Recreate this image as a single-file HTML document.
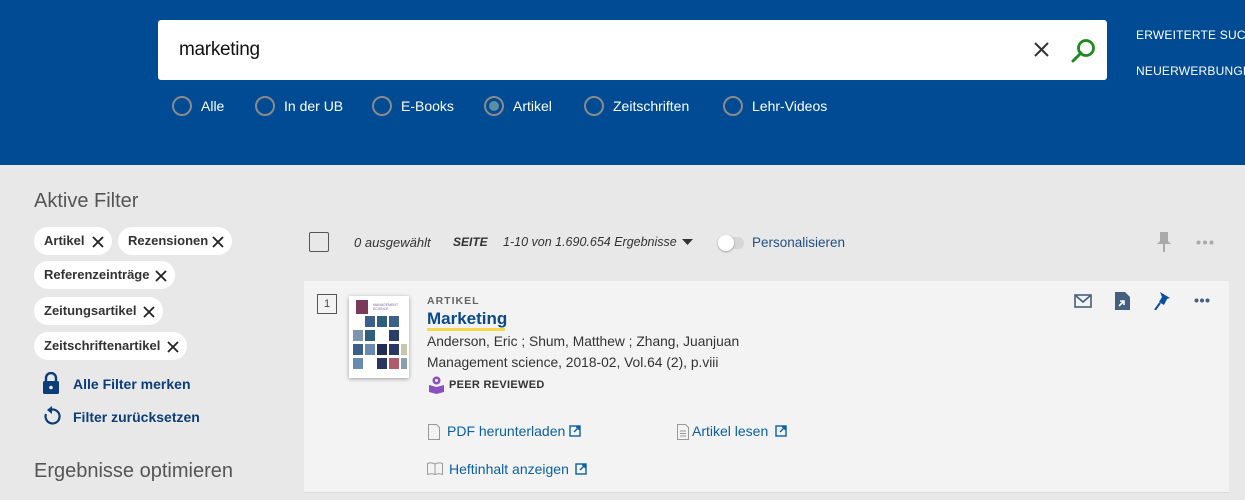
<!DOCTYPE html>
<html><head><meta charset="utf-8">
<style>
*{box-sizing:border-box;margin:0;padding:0}
body{width:1245px;height:500px;overflow:hidden;background:#e8e8e8;font-family:"Liberation Sans",sans-serif;position:relative}
.hdr{position:absolute;left:0;top:0;width:1245px;height:165px;background:#004b93}
.search{position:absolute;left:158px;top:20px;width:949px;height:60px;background:#fff;border-radius:3px}
.search .q{position:absolute;left:21px;top:19px;font-size:19px;color:#111;letter-spacing:-0.3px}
.radios{position:absolute;top:96px;left:172px;color:#fff;font-size:14px}
.r{position:absolute;top:0;white-space:nowrap}
.r i{position:absolute;left:0;top:0;width:20px;height:20px;border:2px solid #8a8a8a;border-radius:50%}
.r span{position:absolute;left:29px;top:2px}
.r i.on::after{content:"";position:absolute;left:3px;top:3px;width:10px;height:10px;border-radius:50%;background:#5b8fa0}
.toplink{position:absolute;left:1136px;color:#fff;font-size:12px;white-space:nowrap;letter-spacing:0.2px}
.ab{position:absolute;left:34px;top:190px;font-size:20px;color:#555;font-weight:300}
.chip{position:absolute;height:28px;background:#fff;border-radius:14px;font-size:13px;font-weight:bold;color:#333;padding:6px 0 0 10px;white-space:nowrap}
.chip svg{position:absolute;right:8px;top:9px}
.lnk{position:absolute;left:73px;font-size:14px;font-weight:bold;color:#0b3d78}
.eo{position:absolute;left:34px;top:460px;font-size:20px;color:#555}
.bar{position:absolute;top:232px;font-size:13px;color:#333;white-space:nowrap}
.card{position:absolute;left:304px;top:281px;width:925px;height:212px;background:#f3f3f3;border-bottom:1px solid #ddd}
.num{position:absolute;left:13px;top:13px;width:20px;height:20px;border:1px solid #555;font-size:11px;color:#444;text-align:center;line-height:18px}
.cover{position:absolute;left:45px;top:15px;width:60px;height:82px;background:#fff;box-shadow:0 1px 4px rgba(0,0,0,.35)}
.cl{position:absolute;font-size:14px;color:#0b5fa5;white-space:nowrap}
</style></head><body>
<div class="hdr">
 <div class="search"><div class="q">marketing</div>
  <svg style="position:absolute;left:875px;top:21px" width="17" height="17" viewBox="0 0 17 17"><path d="M2 2L15 15M15 2L2 15" stroke="#333" stroke-width="2"/></svg>
  <svg style="position:absolute;left:912px;top:17px" width="28" height="28" viewBox="0 0 28 28"><circle cx="16" cy="11" r="7.5" stroke="#1e8a1e" stroke-width="2.8" fill="none"/><path d="M11 16L3 24" stroke="#1e8a1e" stroke-width="3" stroke-linecap="round"/></svg>
 </div>
 <div class="radios">
  <div class="r" style="left:0"><i></i><span>Alle</span></div>
  <div class="r" style="left:83px"><i></i><span>In der UB</span></div>
  <div class="r" style="left:200px"><i></i><span>E-Books</span></div>
  <div class="r" style="left:312px"><i class="on"></i><span>Artikel</span></div>
  <div class="r" style="left:412px"><i></i><span>Zeitschriften</span></div>
  <div class="r" style="left:551px"><i></i><span>Lehr-Videos</span></div>
 </div>
 <div class="toplink" style="top:28px">ERWEITERTE SUCHE</div>
 <div class="toplink" style="top:64px">NEUERWERBUNGEN</div>
</div>

<div class="ab">Aktive Filter</div>
<div class="chip" style="left:34px;top:227px;width:78px">Artikel<svg width="12" height="12"><path d="M1 1L11 11M11 1L1 11" stroke="#222" stroke-width="1.8"/></svg></div>
<div class="chip" style="left:118px;top:227px;width:114px">Rezensionen<svg width="12" height="12"><path d="M1 1L11 11M11 1L1 11" stroke="#222" stroke-width="1.8"/></svg></div>
<div class="chip" style="left:34px;top:261px;width:141px">Referenzeinträge<svg width="12" height="12"><path d="M1 1L11 11M11 1L1 11" stroke="#222" stroke-width="1.8"/></svg></div>
<div class="chip" style="left:34px;top:297px;width:129px">Zeitungsartikel<svg width="12" height="12"><path d="M1 1L11 11M11 1L1 11" stroke="#222" stroke-width="1.8"/></svg></div>
<div class="chip" style="left:34px;top:332px;width:153px">Zeitschriftenartikel<svg width="12" height="12"><path d="M1 1L11 11M11 1L1 11" stroke="#222" stroke-width="1.8"/></svg></div>
<svg style="position:absolute;left:42px;top:372px" width="18" height="22" viewBox="0 0 18 22"><path d="M4 10V6a5 5 0 0110 0v4" stroke="#0b3d78" stroke-width="2.4" fill="none"/><rect x="1" y="9" width="16" height="13" rx="1.5" fill="#0b3d78"/><circle cx="9" cy="15.5" r="1.8" fill="#e8e8e8"/></svg>
<div class="lnk" style="top:376px">Alle Filter merken</div>
<svg style="position:absolute;left:42px;top:405px" width="20" height="22" viewBox="0 0 20 22"><path d="M4 9a7 7 0 106-4.5" stroke="#0b3d78" stroke-width="2.2" fill="none"/><path d="M10 1v8l-5-4z" fill="#0b3d78"/></svg>
<div class="lnk" style="top:409px">Filter zurücksetzen</div>
<div class="eo">Ergebnisse optimieren</div>

<div style="position:absolute;left:309px;top:232px;width:20px;height:20px;border:1.5px solid #555;border-radius:2px"></div>
<div class="bar" style="left:354px;top:235px;font-style:italic">0 ausgewählt</div>
<div class="bar" style="left:453px;top:235px;font-style:italic;font-weight:bold;font-size:12px">SEITE</div>
<div class="bar" style="left:503px;top:235px;font-style:italic;font-size:12.5px">1-10 von 1.690.654 Ergebnisse</div>
<svg style="position:absolute;left:682px;top:239px" width="11" height="6"><path d="M0 0h11L5.5 6z" fill="#333"/></svg>
<div style="position:absolute;left:718px;top:237px;width:26px;height:12px;border-radius:6px;background:#d6d6d6"></div>
<div style="position:absolute;left:718px;top:235px;width:16px;height:16px;border-radius:50%;background:#fff;box-shadow:0 1px 2px rgba(0,0,0,.3)"></div>
<div class="bar" style="left:752px;top:235px;color:#1f4f82;font-size:13.5px">Personalisieren</div>
<svg style="position:absolute;left:1157px;top:231px" width="14" height="21" viewBox="0 0 14 21"><path d="M3 1h8v9l3 3H0l3-3z" fill="#aaa"/><rect x="6" y="13" width="2" height="8" fill="#aaa"/></svg>
<svg style="position:absolute;left:1196px;top:240px" width="18" height="5"><circle cx="2.5" cy="2.5" r="2" fill="#aaa"/><circle cx="9" cy="2.5" r="2" fill="#aaa"/><circle cx="15.5" cy="2.5" r="2" fill="#aaa"/></svg>

<div class="card">
 <div class="num">1</div>
 <div class="cover">
  <svg width="60" height="82" viewBox="0 0 60 82">
   <rect x="7" y="4" width="12" height="14" fill="#7a3a5a"/>
   <text x="24" y="10" font-size="3.5" fill="#7a6a9a" font-family="Liberation Sans">MANAGEMENT</text>
   <text x="24" y="14" font-size="3.5" fill="#7a6a9a" font-family="Liberation Sans">SCIENCE</text>
   <g fill="#3c5f8a">
   <rect x="16" y="20" width="10" height="11"/><rect x="28" y="20" width="10" height="11" fill="#2f5f7a"/><rect x="40" y="20" width="10" height="11"/>
   <rect x="4" y="34" width="10" height="11" fill="#7d95b0"/><rect x="16" y="34" width="10" height="11" fill="#2f5f7a"/><rect x="40" y="34" width="10" height="11" fill="#2a3d6a"/>
   <rect x="4" y="48" width="10" height="11"/><rect x="16" y="48" width="10" height="11" fill="#6a8ab0"/><rect x="28" y="48" width="10" height="11" fill="#222d55"/><rect x="40" y="48" width="10" height="11" fill="#2a3560"/><rect x="52" y="48" width="6" height="11" fill="#c8c8a8"/>
   <rect x="4" y="62" width="10" height="11" fill="#6a8ab0"/><rect x="28" y="62" width="10" height="11" fill="#2a3560"/><rect x="40" y="62" width="10" height="11" fill="#b05a6a"/><rect x="52" y="62" width="6" height="11" fill="#8aa0b0"/>
   </g>
  </svg>
 </div>
 <div class="cl" style="left:123px;top:14px;font-size:10.5px;font-weight:bold;color:#666;letter-spacing:1px">ARTIKEL</div>
 <div class="cl" style="left:123px;top:28px;font-size:17px;font-weight:bold;color:#0b4a8a">Marketing</div>
 <div style="position:absolute;left:123px;top:47px;width:78px;height:3px;background:#f5d94a"></div>
 <div class="cl" style="left:123px;top:53px;color:#333;font-size:13.8px">Anderson, Eric ; Shum, Matthew ; Zhang, Juanjuan</div>
 <div class="cl" style="left:123px;top:74px;color:#333;font-size:13.8px">Management science, 2018-02, Vol.64 (2), p.viii</div>
 <svg style="position:absolute;left:125px;top:95px" width="15" height="18" viewBox="0 0 15 18"><circle cx="7.5" cy="4.5" r="4" fill="#8a4fc0"/><circle cx="7.5" cy="4.5" r="1.5" fill="#fff"/><path d="M0 9l7.5 2 7.5-2v7l-7.5 2-7.5-2z" fill="#8a4fc0"/></svg>
 <div class="cl" style="left:145px;top:98px;font-size:11px;font-weight:bold;color:#333;letter-spacing:0.3px">PEER REVIEWED</div>
 <svg style="position:absolute;left:124px;top:143px" width="12" height="16" viewBox="0 0 12 16"><path d="M.5.5h8l3 3v12H.5z" fill="none" stroke="#999"/></svg>
 <div class="cl" style="left:143px;top:142px">PDF herunterladen</div>
 <svg style="position:absolute;left:265px;top:144px" width="12" height="12"><rect x="1" y="1" width="10" height="10" fill="none" stroke="#0b5fa5" stroke-width="1.4"/><path d="M5 7l5-5M7 2h3v3" stroke="#0b5fa5" stroke-width="1.4" fill="none"/></svg>
 <svg style="position:absolute;left:373px;top:143px" width="12" height="16" viewBox="0 0 12 16"><path d="M.5.5h8l3 3v12H.5z" fill="none" stroke="#999"/><path d="M3 7h6M3 9.5h6M3 12h6" stroke="#999"/></svg>
 <div class="cl" style="left:388px;top:142px">Artikel lesen</div>
 <svg style="position:absolute;left:471px;top:144px" width="12" height="12"><rect x="1" y="1" width="10" height="10" fill="none" stroke="#0b5fa5" stroke-width="1.4"/><path d="M5 7l5-5M7 2h3v3" stroke="#0b5fa5" stroke-width="1.4" fill="none"/></svg>
 <svg style="position:absolute;left:123px;top:181px" width="16" height="13" viewBox="0 0 16 13"><path d="M.5 1.5Q4 0 8 2Q12 0 15.5 1.5v11Q12 11 8 12.5Q4 11 .5 12.5z M8 2v10.5" fill="none" stroke="#999"/></svg>
 <div class="cl" style="left:145px;top:180px">Heftinhalt anzeigen</div>
 <svg style="position:absolute;left:271px;top:182px" width="12" height="12"><rect x="1" y="1" width="10" height="10" fill="none" stroke="#0b5fa5" stroke-width="1.4"/><path d="M5 7l5-5M7 2h3v3" stroke="#0b5fa5" stroke-width="1.4" fill="none"/></svg>
 <svg style="position:absolute;left:770px;top:13px" width="18" height="14" viewBox="0 0 18 14"><rect x="1" y="1" width="16" height="12" fill="none" stroke="#44607f" stroke-width="1.6"/><path d="M1 1l8 7 8-7" fill="none" stroke="#44607f" stroke-width="1.6"/></svg>
 <svg style="position:absolute;left:811px;top:11px" width="15" height="18" viewBox="0 0 15 18"><path d="M0 0h10l5 5v13H0z" fill="#44607f"/><path d="M4 14l5-5M5 9h4v4" stroke="#fff" stroke-width="1.6" fill="none"/></svg>
 <svg style="position:absolute;left:850px;top:11px" width="16" height="18" viewBox="0 0 16 18"><path d="M6 0l10 6-3 1-3 6-5-3 3-5z" fill="#0b4fa0"/><path d="M6 11L1 18" stroke="#0b4fa0" stroke-width="2"/></svg>
 <svg style="position:absolute;left:890px;top:17px" width="16" height="5"><circle cx="2.5" cy="2.5" r="2" fill="#44607f"/><circle cx="8" cy="2.5" r="2" fill="#44607f"/><circle cx="13.5" cy="2.5" r="2" fill="#44607f"/></svg>
</div>
</body></html>
